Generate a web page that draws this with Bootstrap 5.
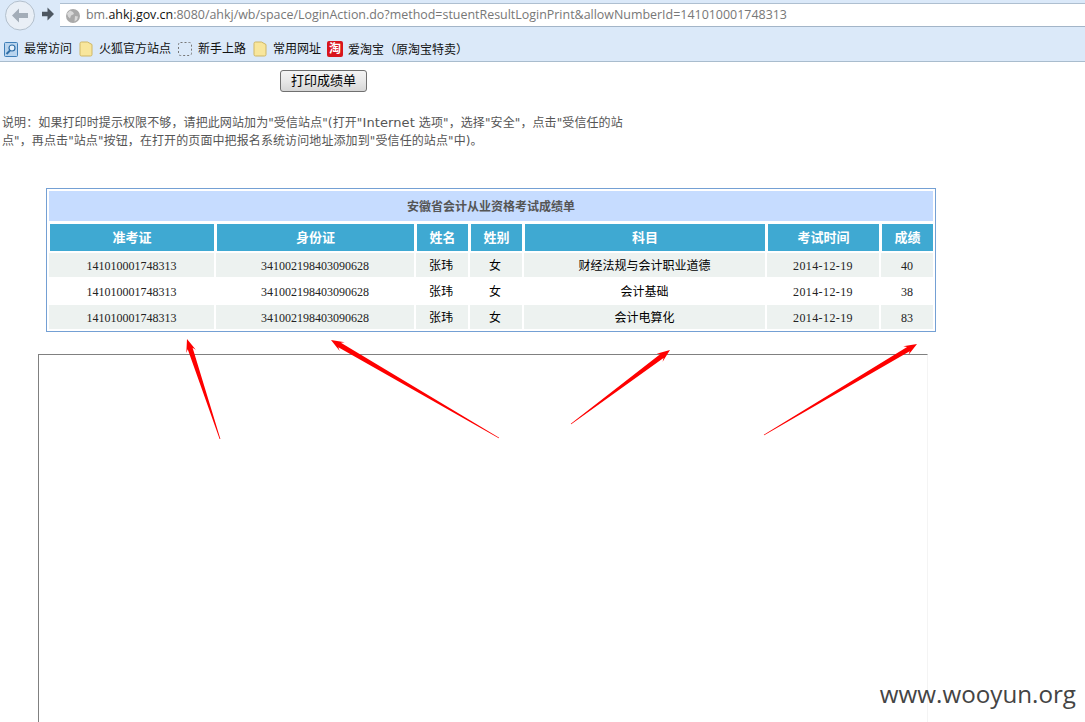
<!DOCTYPE html>
<html lang="zh-CN">
<head>
  <meta charset="UTF-8">
  <title>安徽省会计从业资格考试成绩单</title>
  <link href="https://cdn.jsdelivr.net/npm/bootstrap@5.3.0/dist/css/bootstrap.min.css" rel="stylesheet">
  <style>
    html, body { height: 722px; overflow: hidden; }
    body {
      position: relative;
      background: #fff;
      font-family: "Liberation Sans", "Noto Sans CJK SC", sans-serif;
      font-size: 12px;
      color: #555;
    }
    .browser-bar {
      height: 62px;
      background: #dbe9f9;
      border-bottom: 1px solid #a9bccd;
    }
    .nav-line { height: 27px; }
    .back-icon { margin: 0 0 0 4px; flex: none; align-self: flex-start; }
    .fwd-icon { margin: 0 5px 0 5px; flex: none; }
    .url-box {
      height: 24px;
      margin-top: 3px;
      padding: 1px 0 0 5px;
      background: #fff;
      border-top: 1px solid #aebfd0;
      border-bottom: 1px solid #a3b5c8;
      font-family: "Open Sans", "Liberation Sans", sans-serif;
      font-size: 12.45px;
      color: #777;
      white-space: nowrap;
    }
    .url-text { margin-left: 1px; }
    .url-box b { font-weight: 400; color: #111; }
    .mark-line {
      height: 34px;
      padding: 10px 0 0 4px;
      font-size: 12px;
      color: #111;
      white-space: nowrap;
    }
    .mark-item { margin-right: 7px; }
    .mark-item:nth-child(4) { margin-right: 6px; }
    .mark-item svg { margin-right: 6px; flex: none; }
    .mid-punct { font-family: "Noto Sans CJK TC", sans-serif; }
    .tao-icon {
      width: 16px;
      height: 16px;
      margin-right: 5px;
      border-radius: 2px;
      background: #d8141c;
      color: #fff;
      font-size: 12px;
      font-weight: 700;
      line-height: 16px;
      text-align: center;
    }
    .print-btn {
      display: block;
      width: 87px;
      height: 22px;
      margin: 8px 0 0 280px;
      padding: 0;
      border: 1px solid #707070;
      border-radius: 3px;
      background: linear-gradient(#f4f4f4, #e8e8e8 50%, #d6d6d6);
      color: #000;
      font-size: 13px;
      line-height: 20px;
    }
    .print-note {
      height: 36px;
      margin: 21px 0 0 2px;
      font-family: "DejaVu Sans", "Noto Sans CJK SC", sans-serif;
      letter-spacing: .1px;
      line-height: 18px;
      white-space: nowrap;
    }
    .note-line { display: block; height: 18px; }
    .note-word { font-size: 13px; }
    .score-wrap {
      width: 890px;
      margin: 39px 0 0 46px;
      border: 1px solid #74a0d4;
    }
    .score-table {
      width: 888px;
      table-layout: fixed;
      border-collapse: separate;
      border-spacing: 2px;
      font-size: 12px;
      color: #000;
      text-align: center;
    }
    .score-table th, .score-table td { padding: 1px 0 0; vertical-align: middle; font-weight: 400; }
    .score-table .title-cell {
      height: 30px;
      background: #c6dcff;
      color: #555;
      font-weight: 700;
    }
    .score-table .head-cell {
      height: 28px;
      padding: 0;
      background: #3fa9d2;
      border-left: 1px solid #fff;
      border-top: 1px solid #fff;
      color: #fff;
      font-size: 13px;
      font-weight: 700;
    }
    .score-table td { height: 24px; }
    .score-table .odd-row td { background: #edf2f0; }
    .score-table .num-cell { font-family: "Liberation Serif", serif; color: #222; }
    .score-table .date-cell { letter-spacing: .4px; }
    .score-table .name-cell { padding-right: 2px; }
    .c-ticket { width: 165px; }
    .c-id { width: 198px; }
    .c-short { width: 52px; }
    .c-subject { width: 241px; }
    .c-date { width: 112px; }
    .blank-frame {
      width: 890px;
      height: 380px;
      margin: 22px 0 0 38px;
      border-top: 1px solid #808080;
      border-left: 1px solid #808080;
      border-right: 1px solid #f4f4f4;
    }
    .arrow-layer {
      position: absolute;
      left: 0;
      top: 0;
      pointer-events: none;
    }
    .site-mark {
      position: absolute;
      right: 9px;
      top: 677px;
      font-family: "Open Sans", sans-serif;
      font-size: 24.2px;
      line-height: 33px;
      color: #444;
    }
  </style>
</head>
<body>
  <div class="browser-bar">
    <div class="nav-line d-flex">
      <svg class="back-icon" width="32" height="31" viewBox="0 0 32 31">
        <circle cx="16" cy="15.5" r="14.5" fill="#e9eff6" stroke="#b3c0cd"/>
        <path d="M8 15.5l7-7v4.500h9v5h-9v4.500z" fill="#a3adb8"/>
      </svg>
      <svg class="fwd-icon align-self-center" width="14" height="14" viewBox="0 0 14 14">
        <path d="M13 7L6.500 .5v4.200H1v4.600h5.500v4.200z" fill="#4d5761"/>
      </svg>
      <div class="url-box flex-grow-1 d-flex align-items-center">
        <svg class="me-1" width="16" height="16" viewBox="0 0 16 16">
          <circle cx="8" cy="8" r="7" fill="#a9a9a9"/>
          <path d="M5 2.500l3 1.500 1 2-3 1.500-1 3-2-2-1-3zM10 8l3 .5-1 3.500-2.500 1.500z" fill="#d8d8d8"/>
        </svg>
        <span class="url-text">bm.<b>ahkj.gov.cn</b>:8080/ahkj/wb/space/LoginAction.do?method=stuentResultLoginPrint&amp;allowNumberId=141010001748313</span>
      </div>
    </div>
    <div class="mark-line d-flex align-items-center">
      <div class="mark-item d-flex align-items-center">
        <svg width="14" height="15" viewBox="0 0 14 15">
          <rect x=".5" y=".5" width="13" height="14" rx="1" fill="#b9d4ee" stroke="#3f7fb8"/>
          <circle cx="8" cy="6" r="3" fill="#e8f2fb" stroke="#2f6ea6" stroke-width="1.200"/>
          <path d="M6 8.500L2.500 12" stroke="#2f6ea6" stroke-width="2"/>
        </svg>
        <span>最常访问</span>
      </div>
      <div class="mark-item d-flex align-items-center">
        <svg width="14" height="16" viewBox="0 0 14 16">
          <path d="M1 2.500q0-1.500 1.500-1.500h6L13 3.500v10q0 1.500-1.500 1.500h-9Q1 15 1 13.500z" fill="#f8e69c" stroke="#cfb766"/>
        </svg>
        <span>火狐官方站点</span>
      </div>
      <div class="mark-item d-flex align-items-center">
        <svg width="14" height="14" viewBox="0 0 14 14">
          <rect x=".5" y=".5" width="13" height="13" rx="2" fill="none" stroke="#777" stroke-dasharray="2 2"/>
        </svg>
        <span>新手上路</span>
      </div>
      <div class="mark-item d-flex align-items-center">
        <svg width="14" height="16" viewBox="0 0 14 16">
          <path d="M1 2.500q0-1.500 1.500-1.500h6L13 3.500v10q0 1.500-1.500 1.500h-9Q1 15 1 13.500z" fill="#f8e69c" stroke="#cfb766"/>
        </svg>
        <span>常用网址</span>
      </div>
      <div class="d-flex align-items-center">
        <div class="tao-icon">淘</div>
        <span>爱淘宝<span class="mid-punct">（</span>原淘宝特卖<span class="mid-punct">）</span></span>
      </div>
    </div>
  </div>

  <button type="button" class="print-btn">打印成绩单</button>

  <p class="print-note">
    <span class="note-line">说明<span class="mid-punct">：</span>如果打印时提示权限不够<span class="mid-punct">，</span>请把此网站加为"受信站点"(打开"<span class="note-word">Internet</span> 选项"<span class="mid-punct">，</span>选择"安全"<span class="mid-punct">，</span>点击"受信任的站</span>
    <span class="note-line">点"<span class="mid-punct">，</span>再点击"站点"按钮<span class="mid-punct">，</span>在打开的页面中把报名系统访问地址添加到"受信任的站点"中)。</span>
  </p>

  <div class="score-wrap">
    <table class="score-table">
      <colgroup>
        <col class="c-ticket"><col class="c-id"><col class="c-short"><col class="c-short"><col class="c-subject"><col class="c-date"><col class="c-short">
      </colgroup>
      <thead>
        <tr><th colspan="7" class="title-cell">安徽省会计从业资格考试成绩单</th></tr>
        <tr>
          <th class="head-cell">准考证</th>
          <th class="head-cell">身份证</th>
          <th class="head-cell">姓名</th>
          <th class="head-cell">姓别</th>
          <th class="head-cell">科目</th>
          <th class="head-cell">考试时间</th>
          <th class="head-cell">成绩</th>
        </tr>
      </thead>
      <tbody>
        <tr class="odd-row">
          <td class="num-cell">141010001748313</td><td class="num-cell">341002198403090628</td><td class="name-cell">张玮</td><td class="name-cell">女</td><td>财经法规与会计职业道德</td><td class="num-cell date-cell">2014-12-19</td><td class="num-cell">40</td>
        </tr>
        <tr>
          <td class="num-cell">141010001748313</td><td class="num-cell">341002198403090628</td><td class="name-cell">张玮</td><td class="name-cell">女</td><td>会计基础</td><td class="num-cell date-cell">2014-12-19</td><td class="num-cell">38</td>
        </tr>
        <tr class="odd-row">
          <td class="num-cell">141010001748313</td><td class="num-cell">341002198403090628</td><td class="name-cell">张玮</td><td class="name-cell">女</td><td>会计电算化</td><td class="num-cell date-cell">2014-12-19</td><td class="num-cell">83</td>
        </tr>
      </tbody>
    </table>
  </div>

  <div class="blank-frame"></div>

  <svg id="arrows" class="arrow-layer" width="1085" height="722"></svg>
  <div class="site-mark">www.wooyun.org</div>

  <script>
    // tail x, tail y, tip x, tip y
    const arrows = [
      [220, 439, 187, 339],
      [499, 438, 331, 340],
      [571, 424, 670, 350],
      [764, 435, 917, 344]
    ];

    let html = "";
    arrows.forEach(a => {
      const len = Math.hypot(a[2] - a[0], a[3] - a[1]);
      const dx = (a[2] - a[0]) / len, dy = (a[3] - a[1]) / len;
      const at = (back, side) =>
        (a[2] - dx * back - dy * side).toFixed(1) + "," + (a[3] - dy * back + dx * side).toFixed(1);
      const pts = [at(0, 0), at(13, 5), at(10, 2.6), at(len, 0.4), at(len, -0.4), at(10, -2.6), at(13, -5)];
      html += `<polygon points="${pts.join(" ")}" fill="#fe0000"/>`;
    });
    document.getElementById("arrows").innerHTML = html;
  </script>
  <script src="https://cdn.jsdelivr.net/npm/bootstrap@5.3.0/dist/js/bootstrap.bundle.min.js"></script>
</body>
</html>
